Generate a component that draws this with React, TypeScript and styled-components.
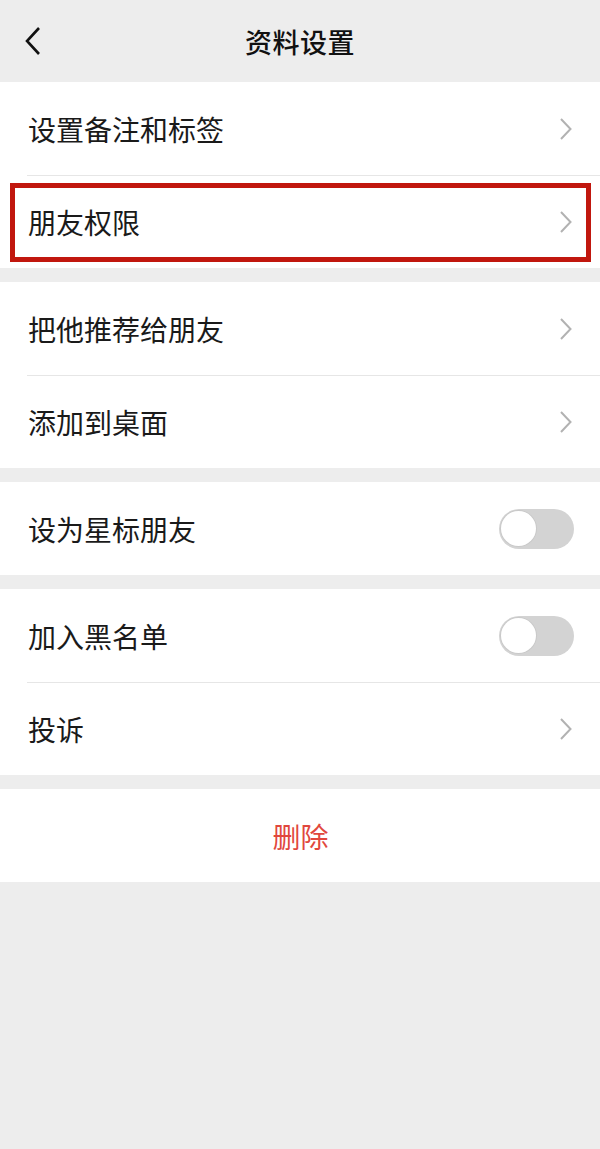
import React from "react";
import styled, { createGlobalStyle } from "styled-components";

const GlobalStyle = createGlobalStyle`
  html, body {
    margin: 0;
    padding: 0;
    background: #ededed;
  }
  body {
    font-family: "Noto Sans CJK SC", "Noto Sans", sans-serif;
    -webkit-font-smoothing: antialiased;
  }
`;

const Page = styled.div`
  width: 600px;
  min-height: 1149px;
  background: #ededed;
  display: flex;
  flex-direction: column;
`;

const Header = styled.div`
  height: 82px;
  display: flex;
  align-items: center;
  justify-content: center;
  position: relative;
  background: #ededed;
`;

const BackButton = styled.div`
  position: absolute;
  left: 22px;
  top: 26px;
  width: 22px;
  height: 30px;
`;

const Title = styled.div`
  font-size: 27px;
  font-weight: 500;
  color: #111;
  letter-spacing: 0.5px;
`;

const Section = styled.div<{ $gap?: number }>`
  background: #fff;
  margin-bottom: ${(p) => p.$gap ?? 14}px;
  display: flex;
  flex-direction: column;
`;

const Row = styled.div<{ $divider?: boolean; $center?: boolean }>`
  position: relative;
  height: 93px;
  display: flex;
  align-items: center;
  justify-content: ${(p) => (p.$center ? "center" : "space-between")};
  padding: 0 27px 0 28px;

  &::before {
    content: "";
    display: ${(p) => (p.$divider ? "block" : "none")};
    position: absolute;
    top: 0;
    left: 27px;
    right: 0;
    height: 1px;
    background: #e6e6e6;
  }
`;

const Label = styled.span<{ $danger?: boolean }>`
  font-size: 28px;
  line-height: 1;
  color: ${(p) => (p.$danger ? "#e1473d" : "#1a1a1a")};
`;

const Highlight = styled.div`
  position: absolute;
  left: 10px;
  right: 9px;
  top: 8px;
  bottom: 6px;
  border: 5px solid #c1170e;
  pointer-events: none;
`;

const Toggle = styled.div`
  width: 75px;
  height: 40px;
  border-radius: 20px;
  background: #d3d3d3;
  box-sizing: border-box;
  display: flex;
  align-items: center;
  padding: 0 2px;
  margin-right: -1px;
`;

const Knob = styled.div`
  width: 35px;
  height: 35px;
  border-radius: 50%;
  background: #fff;
  box-shadow: 0 0 0 1px #c9c9c9;
`;

const Chevron = () => (
  <svg width="14" height="22" viewBox="0 0 14 22">
    <path d="M2 1 L11.5 11 L2 21" fill="none" stroke="#b2b2b2" strokeWidth="2" />
  </svg>
);

const BackIcon = () => (
  <svg width="22" height="30" viewBox="0 0 22 30">
    <path d="M17 2 L5 15 L17 28" fill="none" stroke="#111" strokeWidth="2.6" />
  </svg>
);

type Item = { label: string; kind: "link" | "toggle"; highlight?: boolean };

const groups: Item[][] = [
  [
    { label: "设置备注和标签", kind: "link" },
    { label: "朋友权限", kind: "link", highlight: true },
  ],
  [
    { label: "把他推荐给朋友", kind: "link" },
    { label: "添加到桌面", kind: "link" },
  ],
  [{ label: "设为星标朋友", kind: "toggle" }],
  [
    { label: "加入黑名单", kind: "toggle" },
    { label: "投诉", kind: "link" },
  ],
];

const App = () => (
  <>
    <GlobalStyle />
    <Page>
      <Header>
        <BackButton>
          <BackIcon />
        </BackButton>
        <Title>资料设置</Title>
      </Header>
      {groups.map((items, gi) => (
        <Section key={gi}>
          {items.map((item, i) => (
            <Row key={item.label} $divider={i > 0}>
              <Label>{item.label}</Label>
              {item.kind === "link" ? (
                <Chevron />
              ) : (
                <Toggle>
                  <Knob />
                </Toggle>
              )}
              {item.highlight && <Highlight />}
            </Row>
          ))}
        </Section>
      ))}
      <Section $gap={0}>
        <Row $center>
          <Label $danger>删除</Label>
        </Row>
      </Section>
    </Page>
  </>
);

export default App;
